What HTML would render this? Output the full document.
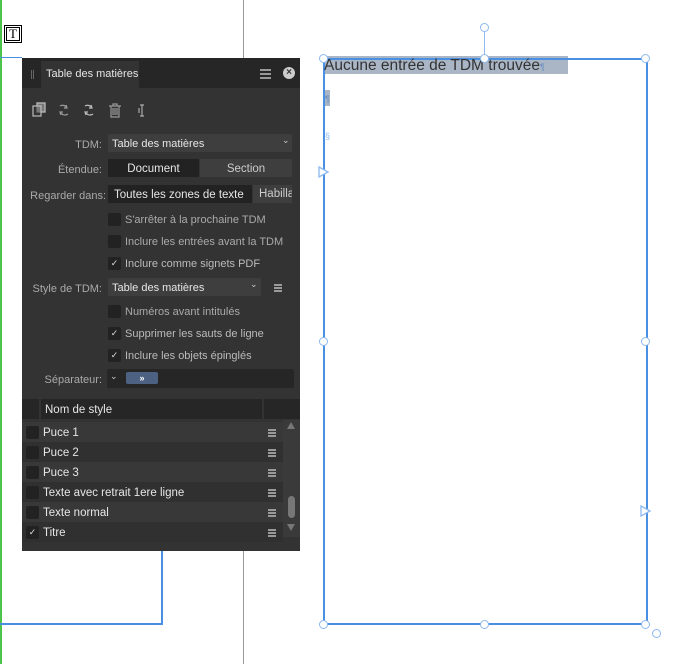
<!DOCTYPE html>
<html><head><meta charset="utf-8"><style>
*{margin:0;padding:0;box-sizing:border-box}
body{width:688px;height:664px;background:#fff;position:relative;overflow:hidden;font-family:"Liberation Sans",sans-serif}
.a{position:absolute}
.p{font-size:11.5px;color:#e6e6e6;white-space:nowrap;margin-top:2px}
.lbl{font-size:11px;color:#aaa;text-align:right;width:80px;left:22px;white-space:nowrap;margin-top:2px}
.cb{width:13px;height:13px;background:#222;border-radius:2px}
.ck{color:#ddd;font-size:9px;line-height:13px;text-align:center}
.row{left:22px;width:261px;height:20px;font-size:11.5px;color:#e6e6e6;line-height:20px}
.ham{width:8px;height:2px;background:#999;box-shadow:0 3px 0 #999,0 6px 0 #999}
.h{width:9px;height:9px;border:1.5px solid #8db9f0;border-radius:50%;background:#fff}
</style></head><body>
<div class="a" style="left:0;top:0;width:2px;height:664px;background:#4cc44c"></div>
<div class="a" style="left:243px;top:0;width:1px;height:664px;background:#999"></div>
<div class="a" style="left:0;top:57px;width:22px;height:1px;background:#4a90e2"></div>
<div class="a" style="left:161px;top:551px;width:2px;height:74px;background:#4a90e2"></div>
<div class="a" style="left:0;top:623px;width:163px;height:2px;background:#4a90e2"></div>
<div class="a" style="left:4px;top:25px;width:18px;height:18px;border:1px solid #000;background:#fff"><div style="margin:1px;border:1px solid #000;height:14px;font-family:'Liberation Serif',serif;font-size:13px;line-height:12px;text-align:center">T</div></div>
<div class="a" style="left:22px;top:58px;width:278px;height:493px;background:#333"></div>
<div class="a" style="left:22px;top:58px;width:278px;height:30px;background:#262626"></div>
<div class="a" style="left:41px;top:61px;width:98px;height:27px;background:#333"></div>
<div class="a" style="left:31px;top:70px;width:1px;height:9px;background:#666;box-shadow:2px 0 0 #666"></div>
<div class="a p" style="left:46px;top:66px;font-size:11px">Table des matières</div>
<div class="a ham" style="left:260px;top:69px;width:11px;box-shadow:0 4px 0 #999,0 8px 0 #999"></div>
<div class="a" style="left:283px;top:67px;width:12px;height:12px;border-radius:50%;background:#ccc;color:#333;font-size:10px;line-height:12px;text-align:center;font-weight:bold">×</div>
<svg class="a" style="left:30px;top:100px" width="160" height="20" viewBox="0 0 160 20" fill="none" stroke="#bbb" stroke-width="1.2">
<rect x="3" y="6" width="8" height="10"/><path d="M7 6V3h8v9h-4"/><rect x="7" y="3" width="8" height="9" fill="#bbb" opacity=".5"/>
<path d="M30 6a5 5 0 0 1 7 2M38 14a5 5 0 0 1-7-1" stroke="#999"/><path d="M36 5l1 3-3 0M31 15l-1-3 3 0" stroke="#999"/>
<path d="M55 6a5 5 0 0 1 7 2M63 14a5 5 0 0 1-7-1"/><path d="M61 5l1 3-3 0M56 15l-1-3 3 0"/>
<path d="M79 6h12M83 6V4h4v2M81 6v11h8V6M83 8v7M85 8v7M87 8v7" stroke="#999"/>
<path d="M110 5h4M110 16h4M112 5v11M109 8v5" stroke="#aaa"/>
</svg>
<div class="a lbl" style="top:137px">TDM:</div>
<div class="a" style="left:108px;top:134px;width:184px;height:18px;background:#3e3e3e;border-radius:2px"></div>
<div class="a p" style="left:112px;top:136px;font-size:11px">Table des matières</div>
<div class="a" style="left:282px;top:135px;color:#ccc;font-size:9px">⌄</div>
<div class="a lbl" style="top:162px">Étendue:</div>
<div class="a" style="left:108px;top:159px;width:91px;height:18px;background:#222"></div>
<div class="a" style="left:200px;top:159px;width:92px;height:18px;background:#3e3e3e"></div>
<div class="a p" style="left:108px;top:161px;width:91px;text-align:center">Document</div>
<div class="a p" style="left:200px;top:161px;width:92px;text-align:center;color:#ccc">Section</div>
<div class="a lbl" style="top:188px;left:26px">Regarder dans:</div>
<div class="a" style="left:108px;top:185px;width:144px;height:18px;background:#222"></div>
<div class="a" style="left:253px;top:185px;width:39px;height:18px;background:#3e3e3e;overflow:hidden"><span class="p" style="position:absolute;left:6px;top:1px;color:#ccc">Habillage</span></div>
<div class="a p" style="left:114px;top:187px">Toutes les zones de texte</div>

<div class="a cb" style="left:108px;top:213px"></div><div class="a p" style="left:125px;top:212px;font-size:11px;color:#aaa">S'arrêter à la prochaine TDM</div>
<div class="a cb" style="left:108px;top:235px"></div><div class="a p" style="left:125px;top:234px;font-size:11px;color:#aaa">Inclure les entrées avant la TDM</div>
<div class="a cb ck" style="left:108px;top:257px">✓</div><div class="a p" style="left:125px;top:256px;font-size:11px;color:#bbb">Inclure comme signets PDF</div>

<div class="a lbl" style="top:281px">Style de TDM:</div>
<div class="a" style="left:108px;top:278px;width:153px;height:18px;background:#3e3e3e;border-radius:2px"></div>
<div class="a p" style="left:112px;top:280px;font-size:11px">Table des matières</div>
<div class="a" style="left:250px;top:279px;color:#ccc;font-size:9px">⌄</div>
<div class="a ham" style="left:274px;top:284px"></div>

<div class="a cb" style="left:108px;top:305px"></div><div class="a p" style="left:125px;top:304px;font-size:11px;color:#aaa">Numéros avant intitulés</div>
<div class="a cb ck" style="left:108px;top:327px">✓</div><div class="a p" style="left:125px;top:326px;font-size:11px;color:#bbb">Supprimer les sauts de ligne</div>
<div class="a cb ck" style="left:108px;top:349px">✓</div><div class="a p" style="left:125px;top:348px;font-size:11px;color:#bbb">Inclure les objets épinglés</div>

<div class="a lbl" style="top:372px">Séparateur:</div>
<div class="a" style="left:107px;top:369px;width:187px;height:19px;background:#262626;border-radius:2px"></div>
<div class="a" style="left:110px;top:371px;color:#ccc;font-size:9px">⌄</div>
<div class="a" style="left:126px;top:372px;width:32px;height:12px;background:#4d6282;border-radius:2px;color:#fff;font-size:9px;line-height:12px;text-align:center;font-weight:bold">»</div>
<div class="a" style="left:22px;top:399px;width:278px;height:20px;background:#262626"></div>
<div class="a" style="left:39px;top:399px;width:2px;height:20px;background:#333"></div>
<div class="a" style="left:262px;top:399px;width:2px;height:20px;background:#333"></div>
<div class="a p" style="left:45px;top:402px">Nom de style</div>
<div class="a row" style="top:422px;background:#383838"></div>
<div class="a row" style="top:442px;background:#303030"></div>
<div class="a row" style="top:462px;background:#383838"></div>
<div class="a row" style="top:482px;background:#303030"></div>
<div class="a row" style="top:502px;background:#383838"></div>
<div class="a row" style="top:522px;background:#303030;height:20px"></div>
<div class="a" style="left:283px;top:420px;width:17px;height:117px;background:#3a3a3a"></div>
<div class="a" style="left:287px;top:422px;width:0;height:0;border-left:4px solid transparent;border-right:4px solid transparent;border-bottom:7px solid #777"></div>
<div class="a" style="left:287px;top:524px;width:0;height:0;border-left:4px solid transparent;border-right:4px solid transparent;border-top:7px solid #777"></div>
<div class="a" style="left:288px;top:496px;width:7px;height:22px;background:#777;border-radius:4px"></div>
<div class="a cb" style="left:26px;top:426px"></div><div class="a p" style="left:43px;top:425px">Puce 1</div><div class="a ham" style="left:268px;top:429px"></div>
<div class="a cb" style="left:26px;top:446px"></div><div class="a p" style="left:43px;top:445px">Puce 2</div><div class="a ham" style="left:268px;top:449px"></div>
<div class="a cb" style="left:26px;top:466px"></div><div class="a p" style="left:43px;top:465px">Puce 3</div><div class="a ham" style="left:268px;top:469px"></div>
<div class="a cb" style="left:26px;top:486px"></div><div class="a p" style="left:43px;top:485px">Texte avec retrait 1ere ligne</div><div class="a ham" style="left:268px;top:489px"></div>
<div class="a cb" style="left:26px;top:506px"></div><div class="a p" style="left:43px;top:505px">Texte normal</div><div class="a ham" style="left:268px;top:509px"></div>
<div class="a cb ck" style="left:26px;top:526px">✓</div><div class="a p" style="left:43px;top:525px">Titre</div><div class="a ham" style="left:268px;top:529px"></div>
<div class="a" style="left:324px;top:56px;width:244px;height:18px;background:#aab6c6"></div>
<div class="a" style="left:324px;top:90px;width:6px;height:16px;background:#aab6c6"></div>
<div class="a" style="left:323px;top:58px;width:325px;height:567px;border:2px solid #4a90e2"></div>
<div class="a" style="left:484px;top:28px;width:1px;height:30px;background:#8db9f0"></div>
<div class="a" style="left:324px;top:57px;font-size:15.5px;color:#333;white-space:nowrap">Aucune entrée de TDM trouvée<span style="font-size:9px;color:#6a8fc0">¶</span></div>
<div class="a" style="left:325px;top:94px;font-size:9px;color:#6a8fc0">¶</div>
<div class="a" style="left:325px;top:131px;font-size:9px;color:#8db9f0">§</div>
<svg class="a" style="left:318px;top:166px" width="12" height="12"><path d="M1 1L10 6L1 11Z" fill="#fff" stroke="#8db9f0" stroke-width="1.3"/></svg>
<svg class="a" style="left:640px;top:505px" width="12" height="12"><path d="M1 1L10 6L1 11Z" fill="#fff" stroke="#8db9f0" stroke-width="1.3"/></svg>
<div class="a h" style="left:480px;top:23px"></div>
<div class="a h" style="left:319px;top:54px"></div>
<div class="a h" style="left:480px;top:54px"></div>
<div class="a h" style="left:641px;top:54px"></div>
<div class="a h" style="left:319px;top:337px"></div>
<div class="a h" style="left:641px;top:337px"></div>
<div class="a h" style="left:319px;top:620px"></div>
<div class="a h" style="left:480px;top:620px"></div>
<div class="a h" style="left:641px;top:620px"></div>
<div class="a h" style="left:652px;top:629px"></div>
</body></html>
